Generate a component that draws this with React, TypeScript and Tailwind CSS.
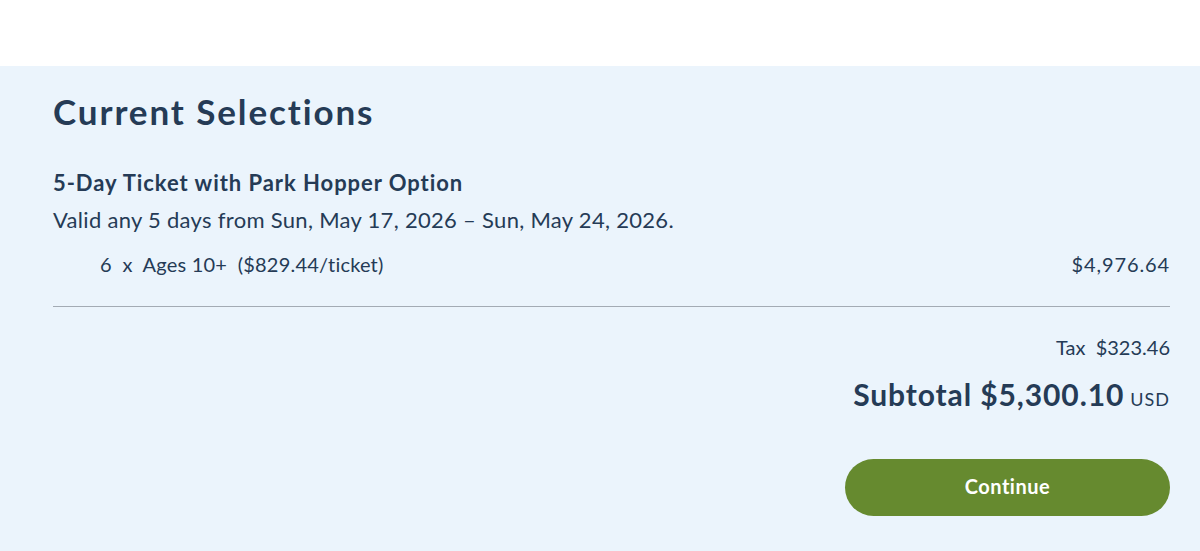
export default function App() {
  return (
    <div className="w-[1200px] h-[551px] bg-white" style={{ fontFamily: "Lato, 'Noto Sans', sans-serif" }}>
      <div className="h-[66px] bg-white" />
      <div className="h-[485px] bg-[#ebf4fc] pl-[53px] pr-[30px] pt-[24px] text-[#253b56]">
        <h1 className="text-[35px] font-bold leading-[42px] tracking-[1.9px]">Current Selections</h1>
        <div className="mt-[38px] text-[22px] font-bold leading-[26px] tracking-[0.95px]">5-Day Ticket with Park Hopper Option</div>
        <div className="mt-[11px] text-[22px] leading-[26px] tracking-[0.3px]">Valid any 5 days from Sun, May 17, 2026 – Sun, May 24, 2026.</div>
        <div className="mt-[19px] flex justify-between text-[20px] leading-[24px] tracking-[0.2px]">
          <div className="pl-[47px]">6&nbsp; x&nbsp; Ages 10+&nbsp; ($829.44/ticket)</div>
          <div className="tracking-[0.9px]">$4,976.64</div>
        </div>
        <div className="mt-[30px] h-px bg-[#a3abb4]" />
        <div className="mt-[28px] flex justify-end text-[20px] leading-[24px]">Tax&nbsp; $323.46</div>
        <div className="mt-[17px] flex justify-end items-baseline">
          <span className="text-[30px] font-bold leading-[36px] tracking-[0.9px]">Subtotal $5,300.10</span>
          <span className="ml-[6px] text-[18px] tracking-[1px]">USD</span>
        </div>
        <div className="mt-[46px] flex justify-end">
          <button className="w-[325px] h-[57px] rounded-full bg-[#668a2f] text-white text-[20px] font-bold tracking-[0.5px] pb-[3px]">Continue</button>
        </div>
      </div>
    </div>
  );
}
